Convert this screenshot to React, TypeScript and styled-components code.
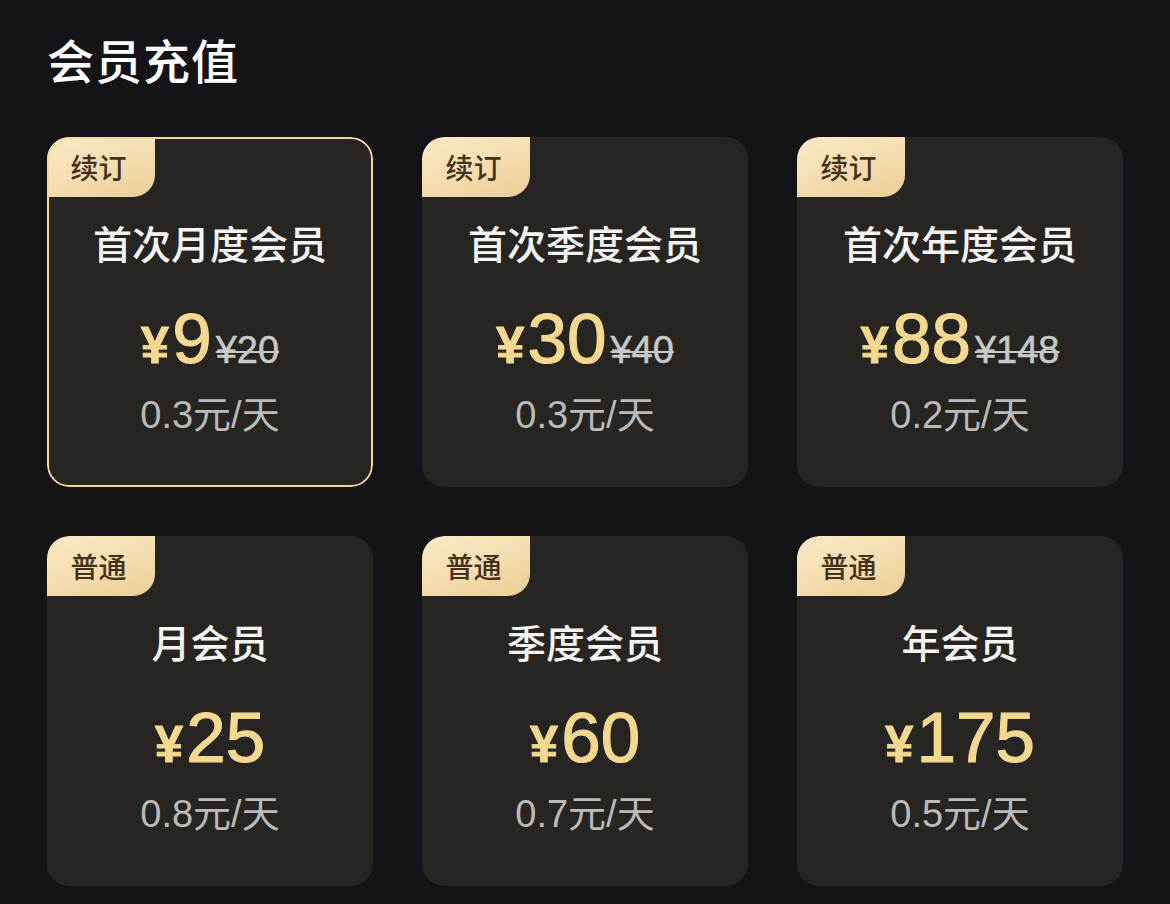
import React from "react";
import styled, { createGlobalStyle, css } from "styled-components";

const GlobalStyle = createGlobalStyle`
  html, body {
    margin: 0;
    padding: 0;
    background: #141418;
  }
  body {
    font-family: "Liberation Sans", "Noto Sans CJK SC", sans-serif;
    -webkit-font-smoothing: antialiased;
  }
`;

const Page = styled.div`
  width: 1170px;
  height: 904px;
  box-sizing: border-box;
  padding: 27px 47px 0 47px;
  background: #141418;
  overflow: hidden;
`;

const Heading = styled.h1`
  margin: 0;
  height: 64px;
  line-height: 64px;
  font-size: 47px;
  font-weight: 500;
  color: #ffffff;
  font-family: "Noto Sans CJK SC", sans-serif;
  letter-spacing: 1px;
`;

const Grid = styled.div`
  margin-top: 46px;
  display: grid;
  grid-template-columns: repeat(3, 326px);
  grid-auto-rows: 350px;
  column-gap: 49px;
  row-gap: 49px;
`;

const Card = styled.div<{ $selected?: boolean }>`
  position: relative;
  box-sizing: border-box;
  border-radius: 22px;
  background: #262522;
  display: flex;
  flex-direction: column;
  align-items: center;
  padding-top: 82px;
  overflow: hidden;
  ${(p) =>
    p.$selected &&
    css`
      &::after {
        content: "";
        position: absolute;
        inset: 0;
        border: 2px solid #f3d89e;
        border-radius: 22px;
        pointer-events: none;
      }
    `}
`;

const Badge = styled.div`
  position: absolute;
  left: 0;
  top: 0;
  width: 108px;
  height: 60px;
  border-radius: 22px 0 22px 0;
  background: linear-gradient(160deg, #fbe9c7 0%, #f4dcae 55%, #eccd95 100%);
  color: #45301a;
  font-family: "Noto Sans CJK SC", sans-serif;
  font-size: 28px;
  font-weight: 500;
  display: flex;
  align-items: center;
  justify-content: center;
  padding-right: 5px;
  box-sizing: border-box;
`;

const Title = styled.div`
  height: 46px;
  line-height: 46px;
  font-size: 39px;
  color: #f4f4f4;
  font-family: "Noto Sans CJK SC", sans-serif;
  font-weight: 500;
`;

const PriceRow = styled.div`
  margin-top: 34px;
  height: 80px;
  line-height: 80px;
  display: flex;
  align-items: baseline;
  color: #f4d88f;
  font-family: "Liberation Sans", sans-serif;
`;

const Yen = styled.span`
  font-size: 51px;
  font-weight: 700;
  margin-right: 3px;
  -webkit-text-stroke: 0.8px #f4d88f;
`;

const Amount = styled.span`
  font-size: 71px;
  font-weight: 400;
  -webkit-text-stroke: 1.2px #f4d88f;
`;

const Original = styled.span`
  font-size: 38px;
  color: #c8c8c8;
  text-decoration: line-through;
  text-decoration-thickness: 2px;
  margin-left: 4px;
  -webkit-text-stroke: 0.5px #c8c8c8;
`;

const PerDay = styled.div`
  margin-top: 14px;
  height: 44px;
  line-height: 44px;
  font-size: 38px;
  color: #bababa;
`;

type Plan = {
  tag: string;
  name: string;
  price: string;
  original?: string;
  perDay: string;
  selected?: boolean;
};

const plans: Plan[] = [
  { tag: "续订", name: "首次月度会员", price: "9", original: "¥20", perDay: "0.3元/天", selected: true },
  { tag: "续订", name: "首次季度会员", price: "30", original: "¥40", perDay: "0.3元/天" },
  { tag: "续订", name: "首次年度会员", price: "88", original: "¥148", perDay: "0.2元/天" },
  { tag: "普通", name: "月会员", price: "25", perDay: "0.8元/天" },
  { tag: "普通", name: "季度会员", price: "60", perDay: "0.7元/天" },
  { tag: "普通", name: "年会员", price: "175", perDay: "0.5元/天" },
];

export default function App() {
  return (
    <>
      <GlobalStyle />
      <Page>
        <Heading>会员充值</Heading>
        <Grid>
          {plans.map((p, i) => (
            <Card key={i} $selected={p.selected}>
              <Badge>{p.tag}</Badge>
              <Title>{p.name}</Title>
              <PriceRow>
                <Yen>¥</Yen>
                <Amount>{p.price}</Amount>
                {p.original && <Original>{p.original}</Original>}
              </PriceRow>
              <PerDay>{p.perDay}</PerDay>
            </Card>
          ))}
        </Grid>
      </Page>
    </>
  );
}
